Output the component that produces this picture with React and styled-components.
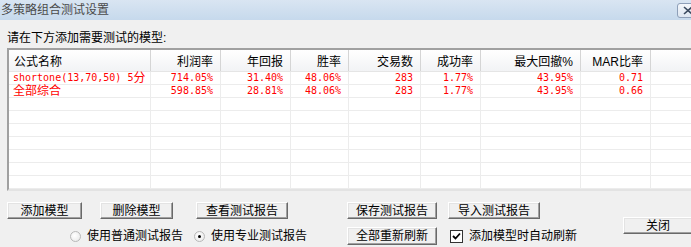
import styled, { createGlobalStyle } from 'styled-components';

const GlobalStyle = createGlobalStyle`
  html, body {
    margin: 0;
    padding: 0;
    background: #f0f0f0;
    overflow: hidden;
  }
  * {
    box-sizing: border-box;
  }
`;

const CJK = `"Liberation Sans", "Noto Sans CJK SC", sans-serif`;
const MONO = `"DejaVu Sans Mono", "Liberation Mono", monospace`;

const columns = [
  { key: 'name', label: '公式名称', width: 142, align: 'left' },
  { key: 'profit', label: '利润率', width: 70 },
  { key: 'annual', label: '年回报', width: 70 },
  { key: 'win', label: '胜率', width: 58 },
  { key: 'trades', label: '交易数', width: 72 },
  { key: 'success', label: '成功率', width: 60 },
  { key: 'drawdown', label: '最大回撤%', width: 100 },
  { key: 'mar', label: 'MAR比率', width: 70 },
];

const rows = [
  {
    name: ['shortone(13,70,50) 5', '分'],
    profit: '714.05%',
    annual: '31.40%',
    win: '48.06%',
    trades: '283',
    success: '1.77%',
    drawdown: '43.95%',
    mar: '0.71',
  },
  {
    name: ['', '全部综合'],
    profit: '598.85%',
    annual: '28.81%',
    win: '48.06%',
    trades: '283',
    success: '1.77%',
    drawdown: '43.95%',
    mar: '0.66',
  },
];

const EMPTY_ROWS = 7;
const gridCols = columns.map((c) => `${c.width}px`).join(' ') + ' 1fr';

const App = () => {
  return (
    <Dialog>
      <GlobalStyle />
      <TitleBar>
        <Title>多策略组合测试设置</Title>
        <CloseBox>
          <svg width="10" height="9" viewBox="0 0 10 9">
            <path d="M1 1 L9 8 M9 1 L1 8" stroke="#3a4a60" strokeWidth="1.6" fill="none" />
          </svg>
        </CloseBox>
      </TitleBar>

      <Body>
        <Prompt>请在下方添加需要测试的模型:</Prompt>

        <Table>
          <HeaderRow $cols={gridCols}>
            {columns.map((c) => (
              <HeaderCell key={c.key} $align={c.align}>
                {c.label}
              </HeaderCell>
            ))}
            <HeaderFill />
          </HeaderRow>

          {rows.map((r, i) => (
            <DataRow key={i} $cols={gridCols}>
              <NameCell>
                {r.name[0] && <Mono>{r.name[0]}</Mono>}
                <span>{r.name[1]}</span>
              </NameCell>
              {columns.slice(1).map((c) => (
                <NumCell key={c.key}>{r[c.key]}</NumCell>
              ))}
              <FillCell />
            </DataRow>
          ))}

          {Array.from({ length: EMPTY_ROWS }).map((_, i) => (
            <DataRow key={`e${i}`} $cols={gridCols}>
              {columns.map((c) => (
                <NumCell key={c.key} />
              ))}
              <FillCell />
            </DataRow>
          ))}
        </Table>

        <Controls>
          <ButtonRow>
            <Button $w={75}>添加模型</Button>
            <Button $w={73} $ml={18}>删除模型</Button>
            <Button $w={92} $ml={23}>查看测试报告</Button>
          </ButtonRow>

          <ButtonRow>
            <Button $w={90}>保存测试报告</Button>
            <Button $w={92} $ml={11}>导入测试报告</Button>
          </ButtonRow>

          <CloseButton>关闭</CloseButton>

          <OptionRow $pl={63}>
            <Option>
              <Radio />
              使用普通测试报告
            </Option>
            <Option $ml={11}>
              <Radio $checked />
              使用专业测试报告
            </Option>
          </OptionRow>

          <OptionRow>
            <Button $w={90} $h={18}>全部重新刷新</Button>
            <Option $ml={13}>
              <Check>
                <svg width="9" height="9" viewBox="0 0 9 9">
                  <path d="M1 4 L3.5 6.5 L8 1.5" stroke="#000" strokeWidth="1.8" fill="none" />
                </svg>
              </Check>
              添加模型时自动刷新
            </Option>
          </OptionRow>
        </Controls>
      </Body>
    </Dialog>
  );
};

export default App;

const Dialog = styled.div`
  width: 700px;
  height: 247px;
  background: #f0f0f0;
  font-family: ${CJK};
  font-size: 12px;
  color: #000;
`;

const TitleBar = styled.div`
  height: 20px;
  display: flex;
  align-items: center;
  padding-left: 1px;
  background: linear-gradient(#d9e5f2, #c6d9ec);
`;

const Title = styled.div`
  font-size: 12px;
  line-height: 14px;
  color: #4a4a4a;
`;

const CloseBox = styled.div`
  margin-left: auto;
  margin-right: 2px;
  width: 21px;
  height: 15px;
  margin-top: 1px;
  border: 1px solid #8e9fb8;
  border-radius: 3px;
  background: linear-gradient(#f4f7fb, #dde6f1);
  display: flex;
  align-items: center;
  justify-content: center;
`;

const Body = styled.div`
  padding-left: 7px;
`;

const Prompt = styled.div`
  margin-top: 11px;
  height: 14px;
  line-height: 14px;
  font-size: 12px;
`;

const Table = styled.div`
  margin-top: 3px;
  margin-right: 4px;
  height: 143px;
  background: #fff;
  border-top: 2px solid #a0a0a0;
  border-left: 2px solid #a0a0a0;
  border-right: 1px solid #e3e3e3;
  border-bottom: 2px solid #e3e3e3;
  overflow: hidden;
`;

const HeaderRow = styled.div`
  display: grid;
  grid-template-columns: ${(p) => p.$cols};
  height: 22px;
  background: linear-gradient(#ffffff, #f2f3f5);
  border-bottom: 1px solid #e5e5e5;
`;

const HeaderCell = styled.div`
  display: flex;
  align-items: center;
  justify-content: ${(p) => (p.$align === 'left' ? 'flex-start' : 'flex-end')};
  padding: ${(p) => (p.$align === 'left' ? '0 0 0 5px' : '0 7px 0 0')};
  border-right: 1px solid #d5d5d5;
  font-size: 12px;
  color: #000;
  white-space: nowrap;
`;

const HeaderFill = styled.div``;

const DataRow = styled.div`
  display: grid;
  grid-template-columns: ${(p) => p.$cols};
  height: 13px;
  border-bottom: 1px solid #ececec;
`;

const NumCell = styled.div`
  border-right: 1px solid #ececec;
  padding-right: 7px;
  text-align: right;
  font-family: ${MONO};
  font-size: 10px;
  line-height: 12px;
  color: #ff0000;
  white-space: nowrap;
`;

const NameCell = styled.div`
  border-right: 1px solid #ececec;
  padding-left: 4px;
  display: flex;
  align-items: center;
  font-size: 12px;
  line-height: 12px;
  color: #ff0000;
  white-space: nowrap;
`;

const Mono = styled.span`
  font-family: ${MONO};
  font-size: 10px;
`;

const FillCell = styled.div``;

const Controls = styled.div`
  margin-top: 11px;
  display: grid;
  grid-template-columns: 340px 276px auto;
  grid-template-rows: 17px 18px;
  row-gap: 8px;
`;

const ButtonRow = styled.div`
  display: flex;
  align-items: stretch;
`;

const Button = styled.button`
  width: ${(p) => p.$w}px;
  height: ${(p) => p.$h || 17}px;
  margin: 0 0 0 ${(p) => p.$ml || 0}px;
  padding: 0;
  font-family: ${CJK};
  font-size: 12px;
  line-height: 12px;
  color: #000;
  background: #f0f0f0;
  border-top: 1px solid #ffffff;
  border-left: 1px solid #ffffff;
  border-right: 1px solid #696969;
  border-bottom: 1px solid #696969;
  box-shadow: inset -1px -1px #a0a0a0, inset 1px 1px #e3e3e3;
  display: flex;
  align-items: center;
  justify-content: center;
`;

const CloseButton = styled(Button)`
  grid-column: 3;
  grid-row: 1 / 3;
  align-self: start;
  width: 70px;
  height: 17px;
  margin-top: 15px;
`;

const OptionRow = styled.div`
  display: flex;
  align-items: center;
  padding-left: ${(p) => p.$pl || 0}px;
`;

const Option = styled.label`
  display: flex;
  align-items: center;
  gap: 6px;
  margin-left: ${(p) => p.$ml || 0}px;
  font-size: 12px;
  line-height: 14px;
  white-space: nowrap;
`;

const Radio = styled.span`
  position: relative;
  width: 11px;
  height: 11px;
  border-radius: 50%;
  border: 1px solid #b8b8b8;
  background: radial-gradient(circle at 40% 40%, #ffffff, #e6e6e6);

  &::after {
    content: '';
    display: ${(p) => (p.$checked ? 'block' : 'none')};
    position: absolute;
    left: 3px;
    top: 3px;
    width: 3px;
    height: 3px;
    border-radius: 50%;
    background: #000;
  }
`;

const Check = styled.span`
  width: 13px;
  height: 13px;
  border: 1px solid #333;
  background: #fff;
  display: flex;
  align-items: center;
  justify-content: center;
`;
